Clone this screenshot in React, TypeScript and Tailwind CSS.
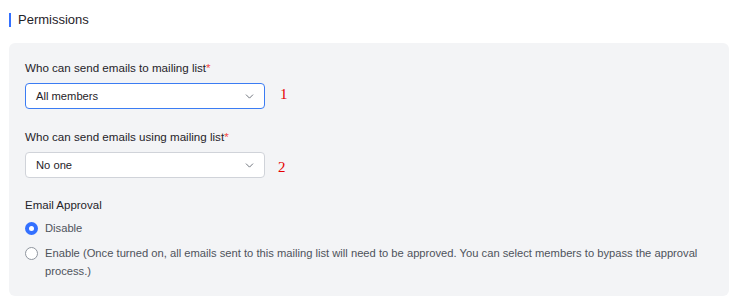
import { ChevronDown } from "lucide-react"

function Select({ value, active }: { value: string; active?: boolean }) {
    return (
        <div
            className={`flex items-center justify-between w-[240px] h-[26px] pl-[10px] pr-[8px] rounded-[4px] bg-white border ${
                active ? "border-[#3b7cf3]" : "border-[#d0d3d9]"
            }`}
        >
            <span className="text-[11.2px] text-[#1f2329]">{value}</span>
            <ChevronDown className="w-[13px] h-[13px] text-[#646a73]" strokeWidth={1.7} />
        </div>
    )
}

export default function App() {
    return (
        <div className="w-[735px] h-[302px] bg-white pt-[13px] pl-[9px] font-['Liberation_Sans',Arial,sans-serif]">
            <div className="flex items-center h-[14px]">
                <div className="w-[2px] h-[14px] bg-[#3370ff]" />
                <h2 className="ml-[7px] text-[13px] leading-[14px] text-[#1f2329]">Permissions</h2>
            </div>

            <div className="mt-[16px] w-[720px] h-[253px] rounded-[6px] bg-[#f3f4f6] px-[16px] pt-[17px]">
                <div className="text-[11.6px] text-[#1f2329] leading-[16px]">
                    Who can send emails to mailing list<span className="text-[#f54a45]">*</span>
                </div>
                <div className="mt-[7px] flex items-center">
                    <Select value="All members" active />
                    <span className="ml-[15px] mb-[5px] text-[15px] leading-[16px] text-[#e60000] font-['Liberation_Serif',serif]">1</span>
                </div>

                <div className="mt-[20px] text-[11.6px] text-[#1f2329] leading-[16px]">
                    Who can send emails using mailing list<span className="text-[#f54a45]">*</span>
                </div>
                <div className="mt-[7px] flex items-center">
                    <Select value="No one" />
                    <span className="ml-[13px] mt-[4px] text-[15px] leading-[16px] text-[#e60000] font-['Liberation_Serif',serif]">2</span>
                </div>

                <div className="mt-[19px] text-[11.5px] text-[#1f2329] leading-[16px]">Email Approval</div>

                <div className="mt-[7px] flex flex-col gap-[7px]">
                    <label className="flex items-start gap-[7px]">
                        <span className="mt-[2px] w-[13px] h-[13px] rounded-full bg-[#3370ff] flex items-center justify-center shrink-0">
                            <span className="w-[5px] h-[5px] rounded-full bg-white" />
                        </span>
                        <span className="text-[11.2px] text-[#4e535b] leading-[17px]">Disable</span>
                    </label>
                    <label className="flex items-start gap-[7px]">
                        <span className="mt-[3px] w-[13px] h-[13px] rounded-full bg-white border border-[#8f959e] shrink-0" />
                        <span className="text-[11.2px] text-[#4e535b] leading-[18px] flex-1">
                            Enable (Once turned on, all emails sent to this mailing list will need to be approved. You can select members to bypass the approval process.)
                        </span>
                    </label>
                </div>
            </div>
        </div>
    )
}
